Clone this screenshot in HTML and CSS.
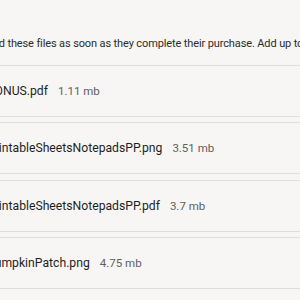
FILE: index.html
```html
<!DOCTYPE html>
<html>
<head>
<meta charset="utf-8">
<link rel="stylesheet" href="styles.css">
</head>
<body>
<div class="page">
  <p class="intro">Customers will be able to download these files as soon as they complete their purchase. Add up to 10 files.</p>
  <div class="files">
    <div class="file"><span class="name">BONUS.pdf</span><span class="size">1.11 mb</span></div>
    <div class="file"><span class="name">PrintableSheetsNotepadsPP.png</span><span class="size">3.51 mb</span></div>
    <div class="file"><span class="name">PrintableSheetsNotepadsPP.pdf</span><span class="size">3.7 mb</span></div>
    <div class="file"><span class="name">PumpkinPatch.png</span><span class="size">4.75 mb</span></div>
  </div>
</div>
</body>
</html>
```
FILE: styles.css
```css
html, body {
  margin: 0;
  padding: 0;
  background: #f7f6f4;
  overflow: hidden;
}
.page {
  width: 900px;
  margin-left: -300px;
  padding-top: 34px;
  font-family: Roboto, "Liberation Sans", sans-serif;
  color: #242424;
}
.intro {
  margin: 0 0 11px 0;
  padding-left: 135px;
  font-size: 11px;
  line-height: 20px;
  letter-spacing: -0.12px;
  white-space: nowrap;
  color: #2b2b2b;
}
.files {
  display: flex;
  flex-direction: column;
  gap: 5.33px;
}
.file {
  height: 50px;
  border: 1px solid #e0ded9;
  display: flex;
  align-items: center;
  gap: 10px;
  padding-left: 286px;
}
.name {
  font-size: 12.2px;
  color: #1f1f1f;
}
.size {
  font-size: 11.5px;
  color: #5f5f5f;
}
```
